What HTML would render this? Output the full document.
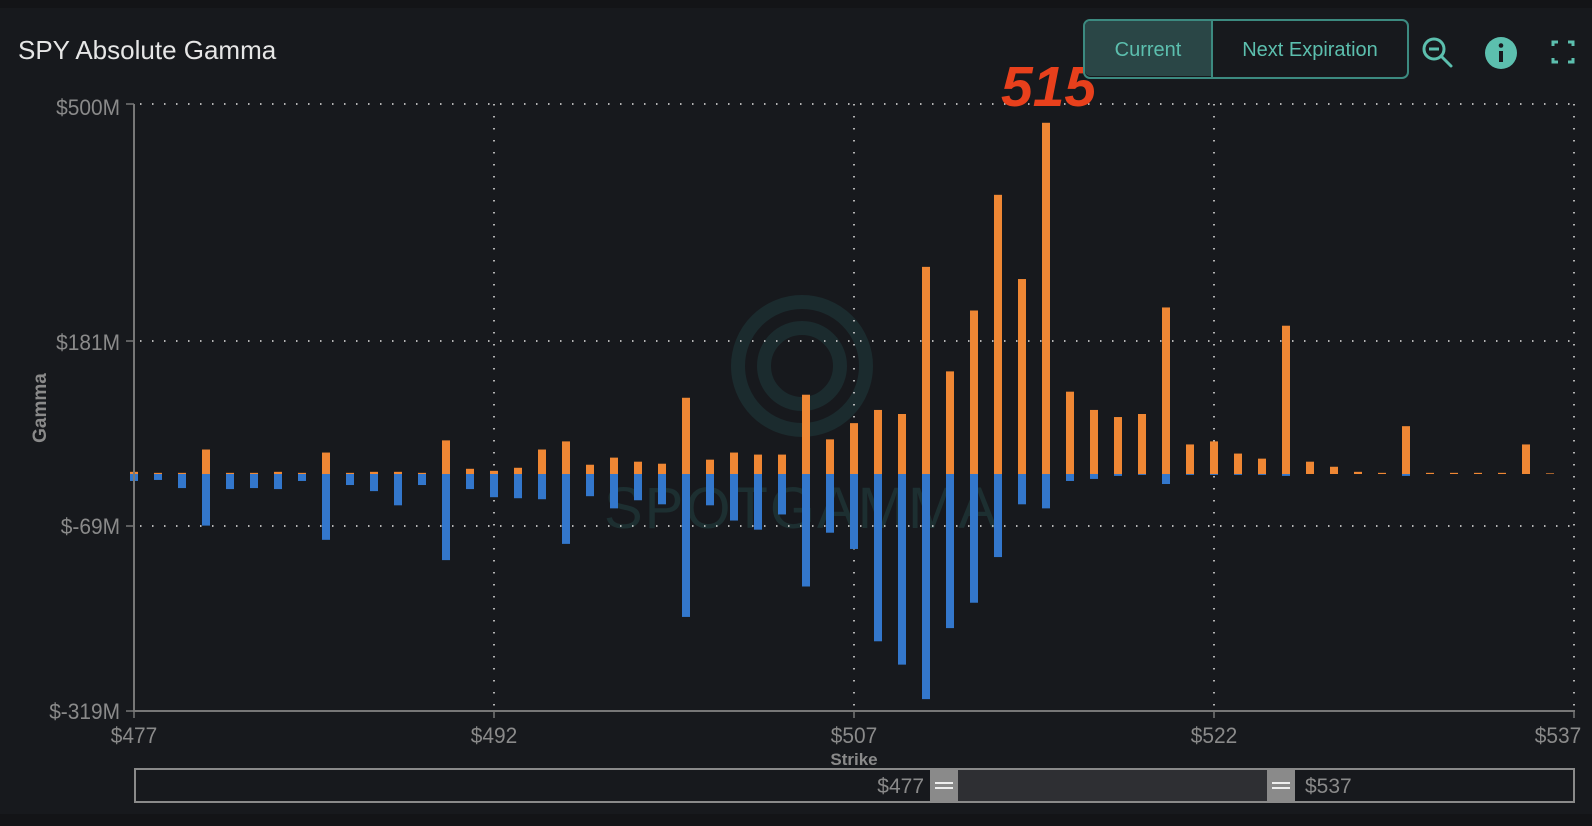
<!DOCTYPE html>
<html><head><meta charset="utf-8"><style>
html,body{margin:0;padding:0;background:#17191d;}
body{width:1592px;height:826px;overflow:hidden;position:relative;font-family:"Liberation Sans",sans-serif;}
svg{position:absolute;left:0;top:0}
</style></head><body>
<svg id="s" width="1592" height="826" xmlns="http://www.w3.org/2000/svg">
<rect x="0" y="0" width="1592" height="8" fill="#131417"/>
<rect x="0" y="814" width="1592" height="12" fill="#131417"/>
<text x="18" y="59" font-size="26" fill="#e6e6e6">SPY Absolute Gamma</text>
<g opacity="0.55" fill="none" stroke="#1f3a3c" stroke-width="14">
<circle cx="802" cy="366" r="64"/>
<circle cx="802" cy="366" r="38"/>
</g>
<text x="604" y="528" font-size="58" fill="#1f3536" opacity="0.8" letter-spacing="2">SPOTGAMMA</text>
<g id="grid" stroke="#cfcfcf" stroke-width="2" stroke-dasharray="1.5 10.5" opacity="0.85"></g>
<g id="bars"></g>
<line x1="134" y1="104" x2="134" y2="712" stroke="#777" stroke-width="2"/>
<line x1="134" y1="711" x2="1575" y2="711" stroke="#777" stroke-width="2"/>
<g id="ticks" stroke="#777" stroke-width="1.5"></g>
<g font-size="22" fill="#8a8a8a" text-anchor="end" transform="translate(120,0) scale(0.95,1) translate(-120,0)">
<text x="120" y="115">$500M</text>
<text x="120" y="350">$181M</text>
<text x="120" y="534">$-69M</text>
<text x="120" y="719">$-319M</text>
</g>
<g font-size="22" fill="#8a8a8a" text-anchor="middle">
<text transform="translate(134,743) scale(0.95,1)">$477</text>
<text transform="translate(494,743) scale(0.95,1)">$492</text>
<text transform="translate(854,743) scale(0.95,1)">$507</text>
<text transform="translate(1214,743) scale(0.95,1)">$522</text>
<text transform="translate(1558,743) scale(0.95,1)">$537</text>
</g>
<text x="854" y="765" font-size="17" font-weight="bold" fill="#8a8a8a" text-anchor="middle">Strike</text>
<text transform="translate(46,408) rotate(-90)" font-size="19" font-weight="bold" fill="#8a8a8a" text-anchor="middle">Gamma</text>
<text x="1001" y="106" font-size="57" font-weight="bold" font-style="italic" fill="#e8401c">515</text>
<rect x="1084" y="20" width="324" height="58" rx="6" fill="#17191d" stroke="#3c8a80" stroke-width="2"/>
<path d="M1211 21 H1090 a5 5 0 0 0 -5 5 V71 a5 5 0 0 0 5 5 H1211 Z" fill="#2a4646"/>
<line x1="1212" y1="21" x2="1212" y2="77" stroke="#3c8a80" stroke-width="2"/>
<text x="1148" y="56" font-size="20" fill="#5cbfae" text-anchor="middle">Current</text>
<text x="1310" y="56" font-size="20" fill="#5cbfae" text-anchor="middle">Next Expiration</text>
<g stroke="#5cbfae" stroke-width="3" fill="none">
<circle cx="1434" cy="49" r="10"/>
<line x1="1441" y1="56" x2="1451" y2="66" stroke-linecap="round"/>
<line x1="1429" y1="49" x2="1439" y2="49"/>
<path d="M1553 46 V42 H1558 M1568 42 H1573 V46 M1573 58 V62 H1568 M1558 62 H1553 V58"/>
</g>
<circle cx="1501" cy="53" r="16" fill="#5cbfae"/>
<rect x="1499" y="51" width="4" height="11" fill="#17191d"/>
<circle cx="1501" cy="45.5" r="2.3" fill="#17191d"/>
<rect x="135" y="769" width="1439" height="33" fill="#17191d" stroke="#8a8a8a" stroke-width="2"/>
<rect x="958" y="770" width="309" height="31" fill="#2e2f33"/>
<rect x="930" y="769" width="28" height="33" fill="#8a8a8a"/>
<rect x="1267" y="769" width="28" height="33" fill="#8a8a8a"/>
<g stroke="#eee" stroke-width="2"><line x1="935" y1="783" x2="953" y2="783"/><line x1="935" y1="788" x2="953" y2="788"/><line x1="1272" y1="783" x2="1290" y2="783"/><line x1="1272" y1="788" x2="1290" y2="788"/></g>
<text x="924" y="793" font-size="21" fill="#8a8a8a" text-anchor="end">$477</text>
<text x="1305" y="793" font-size="21" fill="#8a8a8a">$537</text>
</svg>
<script>
var NS="http://www.w3.org/2000/svg";
function el(t,a,p){var e=document.createElementNS(NS,t);for(var k in a)e.setAttribute(k,a[k]);document.getElementById(p).appendChild(e);}
[104,341,526].forEach(function(y){el("line",{x1:140,y1:y,x2:1575,y2:y},"grid");});
[494,854,1214,1574].forEach(function(x){el("line",{x1:x,y1:104,x2:x,y2:708},"grid");});
[134,494,854,1214,1574].forEach(function(x){el("line",{x1:x,y1:711,x2:x,y2:718},"ticks");});
[104,341,526,711].forEach(function(y){el("line",{x1:126,y1:y,x2:134,y2:y},"ticks");});
var d=[[465,474],[466,473],[466,481],[443,518],[466,482],[466,481],[465,482],[466,474],[446,532],[466,478],[465,484],[465,498],[466,478],[434,552],[462,482],[464,490],[461,491],[443,492],[435,536],[458,489],[451,501],[455,493],[457,497],[392,608],[453,498],[446,513],[448,522],[448,507],[389,578],[433,525],[417,541],[404,632],[408,655],[263,689],[366,619],[306,594],[192,549],[275,497],[121,501],[386,474],[404,472],[411,469],[408,468],[303,477],[438,468],[435,468],[447,468],[452,468],[321,469],[455,467],[460,467],[465,467],[466,467],[420,469],[466,467],[466,467],[466,467],[466,467],[438,467],[466.5,467]];
var s=1.0147,z=474;
d.forEach(function(b,i){var x=134+24*i-4;var t=b[0]*s,bt=b[1]*s;
if(t<z-0.5)el("rect",{x:x,y:t,width:8,height:z-t,fill:"#ef8734"},"bars");
if(bt>z+0.5)el("rect",{x:x,y:z,width:8,height:bt-z,fill:"#3377cc"},"bars");});
</script>
</body></html>
